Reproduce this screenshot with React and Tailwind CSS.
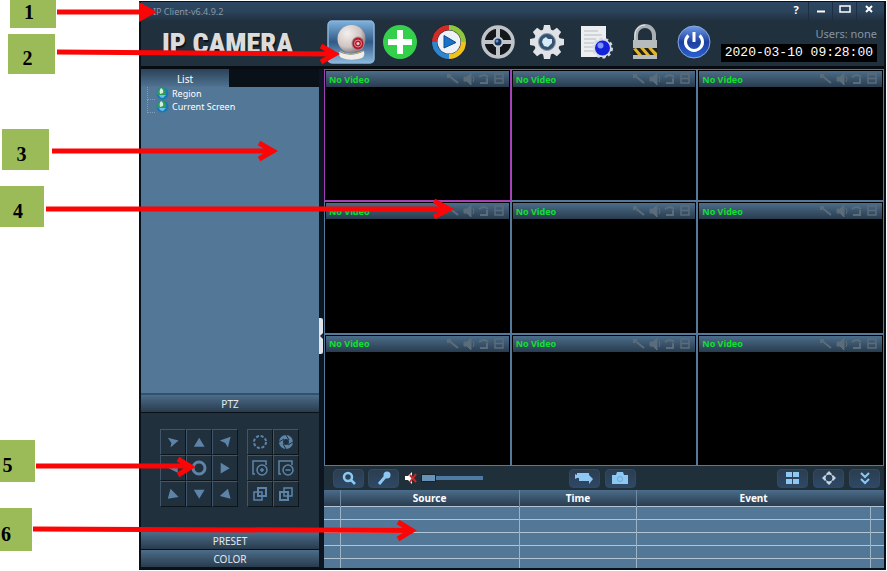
import { useState } from 'react'
import { clsx } from 'clsx'

const bar = 'bg-linear-to-b from-[#4c6d8a] to-[#293c4e]'
const line = { fill: 'none', stroke: 'currentColor' }

const CAMERAS = Array.from({ length: 9 }, (_, i) => i)
const TREE = ['Region', 'Current Screen']
const LOG_ROWS = [0, 1, 2, 3, 4]

const CALLOUTS = [
  { n: 1, box: 'left-[10px] top-0 h-[28px] w-[46px] pr-2 pb-1' },
  { n: 2, box: 'left-[8px] top-[34px] h-[40px] w-[47px] pr-2 pt-2' },
  { n: 3, box: 'left-[2px] top-[129px] h-[41px] w-[47px] pr-2 pt-2' },
  { n: 4, box: 'left-0 top-[186px] h-[41px] w-[44px] pr-2 pt-2' },
  { n: 5, box: 'left-0 top-[440px] h-[42px] w-[35px] pr-5 pt-2' },
  { n: 6, box: 'left-0 top-[508px] h-[43px] w-[32px] pr-5 pt-2' },
]

function CameraIcon() {
  return (
    <svg viewBox="0 0 48 44" className="h-[44px] w-[48px]">
      <defs>
        <linearGradient id="tile" x1="0" y1="0" x2="0" y2="1">
          <stop offset="0" stopColor="#7fb2de" />
          <stop offset="0.5" stopColor="#315a85" />
          <stop offset="1" stopColor="#8db9de" />
        </linearGradient>
        <radialGradient id="ball" cx="0.35" cy="0.3" r="0.8">
          <stop offset="0" stopColor="#f4efed" />
          <stop offset="0.6" stopColor="#cfc5c2" />
          <stop offset="1" stopColor="#6d6668" />
        </radialGradient>
      </defs>
      <rect x="1" y="1" width="46" height="42" rx="4" fill="url(#tile)" stroke="#8ab4dc" strokeWidth="1.500" />
      <path d="M12 32q12 6 25-1 2 7-6 8-9 2-16-1-4-2-3-6z" fill="#f0eee6" />
      <path d="M13 31q10 6 23 0" {...line} stroke="#d3a566" />
      <circle cx="24.500" cy="19" r="14" fill="url(#ball)" />
      <ellipse cx="31" cy="23.500" rx="6.500" ry="7" fill="#a5909a" />
      <ellipse cx="31" cy="23.500" rx="5.500" ry="6" fill="#b01c2b" />
      <circle cx="31" cy="23.500" r="3.500" {...line} stroke="#e58a90" />
      <circle cx="31" cy="23.500" r="1.500" fill="#f6cfd0" />
    </svg>
  )
}

function AddIcon() {
  return (
    <svg viewBox="0 0 36 36" className="size-[36px]">
      <circle cx="18" cy="18" r="17" fill="#35d04b" />
      <path d="M15 6h6v9h9v6h-9v9h-6v-9H6v-6h9z" fill="#fff" />
    </svg>
  )
}

function PlaybackIcon() {
  return (
    <svg viewBox="0 0 36 36" className="size-[36px]">
      <circle cx="18" cy="18" r="17.500" fill="#18222c" />
      <g fill="none" strokeWidth="5">
        <path d="M3.500 18A14.500 14.500 0 0 1 18 3.500" stroke="#d42a26" />
        <path d="M18 3.500A14.500 14.500 0 0 1 32.500 18" stroke="#8fc63f" />
        <path d="M32.500 18A14.500 14.500 0 0 1 18 32.500" stroke="#f2c21c" />
        <path d="M18 32.500A14.500 14.500 0 0 1 3.500 18" stroke="#2f86cf" />
      </g>
      <circle cx="18" cy="18" r="11.500" fill="#eef2f7" />
      <path d="M13 11.500L25 18.500 13 24z" fill="#1673c9" stroke="#0d4b93" />
    </svg>
  )
}

function ReelIcon() {
  return (
    <svg viewBox="0 0 36 36" className="size-[36px]">
      <circle cx="18" cy="18" r="15" fill="#14181c" stroke="#bfc4c9" strokeWidth="3.500" />
      <path d="M18 3v30M3 18h30" stroke="#bfc4c9" strokeWidth="4" />
      <circle cx="18" cy="18" r="5.500" fill="#c6cbd0" />
      <circle cx="18" cy="18" r="3.500" fill="#17335f" />
      <circle cx="17" cy="17" r="1.500" fill="#6b94c6" />
    </svg>
  )
}

function SettingsIcon() {
  return (
    <svg viewBox="0 0 36 36" className="size-[36px]">
      <g fill="#dfe2e6">
        {[0, 45, 90, 135].map(a => (
          <path key={a} d="M15 1h6l1 5v24l-1 5h-6l-1-5V6z" transform={`rotate(${a} 18 18)`} />
        ))}
        <circle cx="18" cy="18" r="13" />
      </g>
      <circle cx="18" cy="18" r="8.500" fill="#35526f" stroke="#8f9ba8" />
      <path d="M14 15l3-2 2 2 4 0v4l-4 4-4-1-2-4z" fill="#d5ecf6" />
    </svg>
  )
}

function LogIcon() {
  return (
    <svg viewBox="0 0 36 36" className="size-[36px]">
      <path d="M3 2h25v31H3z" fill="#eceef0" />
      <path d="M6 7h14M6 11h18M6 15h12M6 19h10M6 23h9M6 27h10" stroke="#b6bbc0" />
      <circle cx="24.500" cy="24" r="9" fill="#d4d9e6" stroke="#d4d9e6" strokeWidth="3" strokeDasharray="3 2.600" />
      <circle cx="24.500" cy="24" r="7.500" fill="#1322d8" />
      <circle cx="22.500" cy="21.500" r="3" fill="#7d93ff" />
    </svg>
  )
}

function LockIcon() {
  return (
    <svg viewBox="0 0 36 36" className="size-[36px]">
      <path d="M9 18v-7a9 9 0 0 1 18 0v7" fill="none" stroke="#a9b0b3" strokeWidth="4" />
      <path d="M8 17v-6a10 10 0 0 1 10-10" fill="none" stroke="#e4e8ea" />
      <rect x="6" y="16" width="24" height="19" fill="#b6bcbd" />
      <rect x="6" y="24" width="24" height="7" fill="#20201c" />
      <path d="M6 25l5 6h4l-6-7zM13 24l6 7h4l-6-7zM21 24l6 7h3v-2l-5-5z" fill="#e0b52c" />
    </svg>
  )
}

function PowerIcon() {
  return (
    <svg viewBox="0 0 36 36" className="size-[36px]">
      <defs>
        <linearGradient id="power" x1="0" y1="0" x2="0" y2="1">
          <stop offset="0" stopColor="#6f9be6" />
          <stop offset="0.5" stopColor="#1c3fa0" />
          <stop offset="1" stopColor="#2c62d4" />
        </linearGradient>
      </defs>
      <circle cx="18" cy="18" r="16" fill="url(#power)" stroke="#8aa9e2" />
      <path d="M12.500 11.500a8.500 8.500 0 1 0 11 0" fill="none" stroke="#fff" strokeWidth="3" />
      <path d="M18 8v10" stroke="#fff" strokeWidth="3" />
    </svg>
  )
}

const TOOLS = [
  { label: 'Add device', Icon: AddIcon },
  { label: 'Playback', Icon: PlaybackIcon },
  { label: 'Record', Icon: ReelIcon },
  { label: 'Settings', Icon: SettingsIcon },
  { label: 'Log', Icon: LogIcon },
  { label: 'Lock', Icon: LockIcon },
  { label: 'Exit', Icon: PowerIcon },
]

function TitleBar() {
  return (
    <div className="flex h-[19px] items-center justify-between bg-linear-to-b from-[#2d4763] via-[#2b435b] to-[#22303f] pl-3 pr-1 text-white">
      <span className="text-[9px] text-[#8b98a5]">IP Client-v6.4.9.2</span>
      <div className="flex h-full">
        <button aria-label="Help" className="w-6 pb-[5px] text-[11px] font-bold leading-none">?</button>
        {['Minimize', 'Maximize', 'Close'].map((name, i) => (
          <button key={name} aria-label={name} className="flex w-6 items-center justify-center border-l border-[#1d2e42] pb-[5px]">
            <svg viewBox="0 0 12 10" className="h-[10px] w-[12px]" {...line}>
              {i === 0 && <path d="M2 7.500h8" strokeWidth="2" />}
              {i === 1 && <path d="M1 2h10v6H1z" strokeWidth="1.500" />}
              {i === 2 && <path d="M3 2l6 6M9 2L3 8" strokeWidth="2" />}
            </svg>
          </button>
        ))}
      </div>
    </div>
  )
}

function Header() {
  return (
    <header className="flex h-[45px] items-center bg-[#20303d]">
      <h1 className="w-[186px] whitespace-nowrap pl-[21px] font-['Impact','Roboto_Condensed','Roboto',sans-serif] text-[28px] font-black leading-none text-[#dcdcdc] [text-shadow:1px_2px_1px_#0b1117]">
        IP CAMERA
      </h1>
      <nav className="flex items-center pb-1">
        <button aria-label="Live view"><CameraIcon /></button>
        <div className="flex gap-[13px] pl-[7px]">
          {TOOLS.map(({ label, Icon }) => (
            <button key={label} aria-label={label}><Icon /></button>
          ))}
        </div>
      </nav>
      <div className="ml-auto pr-[7px] pt-[2px] text-right">
        <div className="h-[16px] text-[11px] leading-[12px] text-[#8795a1]">Users: none</div>
        <div className="h-[18px] bg-black px-[4px] font-['Liberation_Mono',monospace] text-[13px] leading-[18px] text-white">
          2020-03-10 09:28:00
        </div>
      </div>
    </header>
  )
}

function Globe() {
  return (
    <svg viewBox="0 0 13 13" className="size-[13px]">
      <circle cx="6.500" cy="6.500" r="6" fill="#1579b8" />
      <path d="M6 0.500q5 1 4 7l-4 1-5-1q-1-5 5-7z" fill="#2f9b59" />
      <path d="M5 1q3 2 2 5l-3 1q-1-4 1-6z" fill="#d3f0df" />
      <path d="M3 8h7l-3 3q-3 0-4-3z" fill="#6cc0e8" />
    </svg>
  )
}

// order runs left to right, top to bottom
const MOVES = [
  { name: 'Up left', d: 'M2 3L14 6 5 14 6 9z' },
  { name: 'Up', d: 'M8 3L14 13H2z' },
  { name: 'Up right', d: 'M14 2L11 14 8 9 2 6z' },
  { name: 'Left', d: 'M3 8L13 3V13z' },
  { name: 'Auto', d: '' },
  { name: 'Right', d: 'M13 8L3 2V14z' },
  { name: 'Down left', d: 'M5 2L14 11 2 13z' },
  { name: 'Down', d: 'M8 13L2 3H14z' },
  { name: 'Down right', d: 'M11 2L14 13 2 10z' },
]

function PtzButton({ label, children }) {
  return (
    <button aria-label={label} className="flex size-[26px] items-center justify-center border border-[#41566a] border-r-[#0c141c] border-b-[#0c141c] text-[#5d84a8]">
      <svg viewBox="0 0 16 16" className="size-[16px] shrink-0" {...line} strokeWidth="1.500">{children}</svg>
    </button>
  )
}

function Ptz() {
  return (
    <div className="flex h-[119px] gap-[9px] bg-[#20303d] pl-[19px] pt-[16px]">
      <div className="grid h-fit w-fit grid-cols-3">
        {MOVES.map(m => (
          <PtzButton key={m.name} label={m.name}>
            {m.d
              ? <path d={m.d} fill="currentColor" stroke="none" transform="translate(1 1) scale(0.9)" />
              : <circle cx="8" cy="8" r="6" strokeWidth="3" />}
          </PtzButton>
        ))}
      </div>
      <div className="grid h-fit w-fit grid-cols-2">
        <PtzButton label="Iris open"><circle cx="8" cy="8" r="6" strokeWidth="2" strokeDasharray="3 1.700" /></PtzButton>
        <PtzButton label="Iris close">
          <circle cx="8" cy="8" r="5" strokeWidth="4" />
          <path d="M8 1l3 5M15 8l-5 3M8 15l-3-5M1 8l5-3" stroke="#20303d" strokeWidth="1" />
        </PtzButton>
        <PtzButton label="Zoom in">
          <path d="M3 14H1V1h13v4" />
          <circle cx="10" cy="10" r="5" />
          <path d="M10 8v4M8 10h4" />
        </PtzButton>
        <PtzButton label="Zoom out">
          <path d="M3 14H1V1h13v4" />
          <circle cx="10" cy="10" r="5" />
          <path d="M7.500 10h5" />
        </PtzButton>
        <PtzButton label="Focus near">
          <path d="M6 2h8v8H6z" strokeWidth="2" />
          <path d="M2 6h8v8H2z" />
        </PtzButton>
        <PtzButton label="Focus far">
          <path d="M6 2h8v8H6z" />
          <path d="M2 6h8v8H2z" strokeWidth="2" />
        </PtzButton>
      </div>
    </div>
  )
}

function SectionButton({ children }) {
  return (
    <button className={clsx(bar, 'block h-[18px] w-full border-b border-[#0a1118] text-[10px] leading-none text-[#e3e9ee]')}>
      {children}
    </button>
  )
}

function Sidebar() {
  return (
    <aside className="flex w-[178px] shrink-0 flex-col">
      <div className="h-[18px] bg-[#091017]">
        <button className="block h-full w-[88px] bg-linear-to-b from-[#2c4257] to-[#507493] pt-[2px] text-[10px] leading-none text-white">List</button>
      </div>
      <ul className="flex-1 bg-[#527797] pl-[6px] text-[9px] leading-[12px] text-white">
        {TREE.map(item => (
          <li key={item} className="flex h-[13px] items-center">
            <span className="mr-[1px] h-full w-[8px] border-b border-l border-dotted border-[#7f9db7]" />
            <Globe />
            <span className="pl-[3px]">{item}</span>
          </li>
        ))}
      </ul>
      <div className="border-t-2 border-[#34506f]"><SectionButton>PTZ</SectionButton></div>
      <Ptz />
      <SectionButton>PRESET</SectionButton>
      <SectionButton>COLOR</SectionButton>
    </aside>
  )
}

function CameraCell({ index, active, onSelect }) {
  return (
    <section
      onClick={onSelect}
      className={clsx('flex min-h-[100px] flex-col border bg-black', active ? 'border-[#a040b4]' : 'border-[#54799a]')}
    >
      <div className={clsx(bar, 'm-px flex h-[16px] items-center justify-between pl-[3px] pr-[4px]')}>
        <span className="text-[9px] font-bold leading-none text-[#0fe02f]">No Video</span>
        <svg viewBox="0 0 60 14" aria-label={`Camera ${index + 1} controls`} className="h-[14px] w-[60px] text-[#5b6c7b]" {...line}>
          <path d="M2 3h4M3 2v4M3 3l10 8" strokeWidth="2" />
          <path d="M19 5h3l4-4v12l-4-4h-3z" fill="currentColor" />
          <path d="M28 4q2 3 0 6" />
          <path d="M34 5q5-4 9 0M35 11h7V6" strokeWidth="2" />
          <path d="M50 2h8v9h-8zM50 6.500h8" strokeWidth="1.500" />
        </svg>
      </div>
    </section>
  )
}

function PlayerButton({ label, children }) {
  return (
    <button aria-label={label} className="flex h-[19px] w-[31px] items-center justify-center rounded-[4px] border border-[#35495d] bg-linear-to-b from-[#2a3e50] to-[#2e4866] text-[#8cc8f2]">
      <svg viewBox="0 0 20 14" className="h-[14px] w-[20px]" {...line} strokeWidth="2">{children}</svg>
    </button>
  )
}

function PlayerBar() {
  return (
    <div className="flex h-[24px] items-center bg-[#1f303b] pl-[9px] pr-[4px]">
      <div className="flex flex-1 items-center gap-[4px]">
        <PlayerButton label="Search"><circle cx="9" cy="6" r="4" strokeWidth="2.500" /><path d="M12 9l4 4" strokeWidth="2.500" /></PlayerButton>
        <PlayerButton label="Talk">
          <circle cx="13" cy="4" r="3.500" fill="currentColor" stroke="none" />
          <path d="M11 6l-6 7" strokeWidth="3" />
        </PlayerButton>
        <button aria-label="Mute" className="ml-[1px]">
          <svg viewBox="0 0 13 14" className="h-[14px] w-[13px]">
            <path d="M1 5h3l4-4v12L4 9H1z" fill="#fff" />
            <path d="M6 4l6 7M12 3l-6 8" stroke="#d22525" strokeWidth="2" />
          </svg>
        </button>
        <input
          type="range"
          aria-label="Volume"
          defaultValue="0"
          className="h-[8px] w-[62px] appearance-none bg-[linear-gradient(#4d7ba4,#4d7ba4)] bg-[length:100%_4px] bg-center bg-no-repeat [&::-webkit-slider-thumb]:h-[8px] [&::-webkit-slider-thumb]:w-[15px] [&::-webkit-slider-thumb]:appearance-none [&::-webkit-slider-thumb]:border [&::-webkit-slider-thumb]:border-[#16222c] [&::-webkit-slider-thumb]:bg-[#6893b6]"
        />
      </div>
      <div className="flex gap-[5px] pr-[9px]">
        <PlayerButton label="Record all"><path d="M1 3l2 1V2h12v2l4 4-4 5v-3H5V7H3L1 8z" fill="currentColor" stroke="none" /></PlayerButton>
        <PlayerButton label="Snapshot">
          <path d="M2 4h4l1-3h6l1 3h4v9H2z" fill="currentColor" stroke="none" />
          <circle cx="10" cy="8" r="2.500" stroke="#6aa8d8" strokeWidth="1" />
        </PlayerButton>
      </div>
      <div className="flex flex-1 justify-end gap-[5px]">
        <PlayerButton label="Layout"><path d="M3 1h6v5H3zM10 1h6v5h-6zM3 8h6v5H3zM10 8h6v5h-6z" fill="currentColor" stroke="none" /></PlayerButton>
        <PlayerButton label="Full screen">
          <path d="M10 0l3 3H7zM10 14l-3-3h6zM3 7l3-3v6zM17 7l-3 3V4z" fill="#c3d5e2" stroke="none" />
          <circle cx="10" cy="7" r="4" stroke="#c3d5e2" strokeWidth="1" />
        </PlayerButton>
        <PlayerButton label="Collapse"><path d="M6 2l4 4 4-4M6 8l4 4 4-4" /></PlayerButton>
      </div>
    </div>
  )
}

function EventLog() {
  return (
    <table className="w-full table-fixed border-collapse bg-[#527797] text-[10px] text-white">
      <colgroup>
        <col className="w-[16px]" />
        <col className="w-[32%]" />
        <col className="w-[21%]" />
        <col />
        <col className="w-[14px]" />
      </colgroup>
      <thead>
        <tr className={clsx(bar, 'h-[16px] leading-none')}>
          <td className="border-r border-[#6d8aa5]" />
          <th className="border-r border-[#6d8aa5] p-0">Source</th>
          <th className="border-r border-[#6d8aa5] p-0">Time</th>
          <th className="p-0">Event</th>
          <td />
        </tr>
      </thead>
      <tbody>
        {LOG_ROWS.map(r => (
          <tr key={r} className="h-[13px] border-t border-[#b3c5d4] last:h-[10px]">
            <td className="border-r border-[#9db3c6] p-0" />
            <td className="border-r border-[#9db3c6] p-0" />
            <td className="border-r border-[#9db3c6] p-0" />
            <td className="border-r border-[#9db3c6] p-0" />
            <td className="p-0" />
          </tr>
        ))}
      </tbody>
    </table>
  )
}

function Callouts() {
  return (
    <div className="pointer-events-none absolute inset-0">
      {CALLOUTS.map(c => (
        <div key={c.n} className={clsx(c.box, "absolute flex items-center justify-center bg-[#9bbb59] font-['Liberation_Serif',serif] text-[20px] font-bold leading-none text-black")}>
          {c.n}
        </div>
      ))}
      <svg className="absolute left-0 top-0 h-[571px] w-[887px]" fill="none" stroke="#fb0606" strokeWidth="5">
        <path d="M57 12H142" />
        <path d="M139 2l18 10-18 10z" fill="#fb0606" stroke="none" />
        <path d="M57 52L334 54M321 46l14 8-14 8" />
        <path d="M52 151H272M259 143l14 8-14 8" />
        <path d="M46 209H448M434 201l15 8-15 8" />
        <path d="M36 466H190M178 459l13 8-13 8" />
        <path d="M33 529L412 530.500M398 522l14 8.500-14 8.500" />
      </svg>
    </div>
  )
}

export default function App() {
  const [selected, setSelected] = useState(0)

  return (
    <div className="relative flex min-h-screen bg-white pb-px pl-[139px] pr-[1px] pt-[1px] font-['Noto_Sans',sans-serif]">
      <div className="flex min-w-0 flex-1 flex-col border-2 border-t border-[#08111b]">
        <TitleBar />
        <Header />
        <main className="flex flex-1 border-t-3 border-[#060c12]">
          <Sidebar />
          <div className="flex w-[5px] shrink-0 items-center bg-[#0d1620]">
            <button aria-label="Collapse sidebar" className="mt-[34px] h-[36px] w-[4px] rounded-r-[2px] bg-[#e2e6ea] text-[#1d2a36]">
              <svg viewBox="0 0 4 6" className="h-[6px] w-[4px]"><path d="M4 0v6L1 3z" fill="currentColor" /></svg>
            </button>
          </div>
          <div className="flex min-w-0 flex-1 flex-col">
            <div className="grid flex-1 grid-cols-3 grid-rows-3 bg-[#0a1016]">
              {CAMERAS.map(i => (
                <CameraCell key={i} index={i} active={i === selected} onSelect={() => setSelected(i)} />
              ))}
            </div>
            <PlayerBar />
            <EventLog />
          </div>
        </main>
      </div>
      <Callouts />
    </div>
  )
}
